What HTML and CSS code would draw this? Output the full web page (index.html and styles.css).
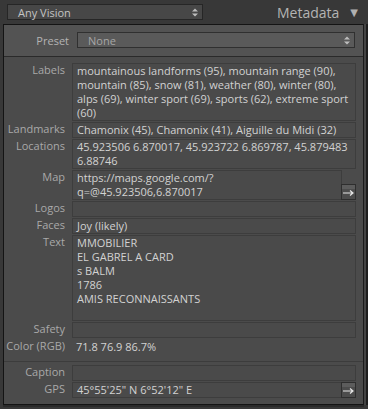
FILE: index.html
```html
<!DOCTYPE html>
<html lang="en">
<head>
	<meta charset="UTF-8">
	<meta name="viewport" content="width=device-width, initial-scale=1.0">
	<title>Metadata</title>
	<link rel="stylesheet" href="styles.css">
</head>
<body>

	<div class="header">
		<div class="popup">
			<span>Any Vision</span>
			<svg class="stepper" width="6" height="9" viewBox="0 0 6 9"><path d="M0 3.5L3 0.5 6 3.5zM0 5.5L3 8.5 6 5.5z" fill="#bdbdbd"/></svg>
		</div>
		<div class="title">Metadata</div>
		<div class="collapse">&#x25BC;</div>
	</div>

	<div class="panel">
		<div class="preset">
			<span class="preset-label">Preset</span>
			<div class="popup preset-popup">
				<span>None</span>
				<svg class="stepper" width="6" height="9" viewBox="0 0 6 9"><path d="M0 3.5L3 0.5 6 3.5zM0 5.5L3 8.5 6 5.5z" fill="#bdbdbd"/></svg>
			</div>
		</div>

		<div class="rows">
			<div class="label">Labels</div>
			<div class="field">mountainous landforms (95), mountain range (90), mountain (85), snow (81), weather (80), winter (80), alps (69), winter sport (69), sports (62), extreme sport (60)</div>

			<div class="label">Landmarks</div>
			<div class="field">Chamonix (45), Chamonix (41), Aiguille du Midi (32)</div>

			<div class="label">Locations</div>
			<div class="field">45.923506 6.870017, 45.923722 6.869787, 45.879483 6.88746</div>

			<div class="label">Map</div>
			<div class="with-button">
				<div class="field">https://maps.google.com/?<br>q=@45.923506,6.870017</div>
				<div class="go"><svg width="13" height="8" viewBox="0 0 13 8"><path d="M1 4h10M8 1.5l3 2.5-3 2.5" fill="none" stroke="#e6e6e6" stroke-width="1.2"/></svg></div>
			</div>

			<div class="label">Logos</div>
			<div class="field"></div>

			<div class="label">Faces</div>
			<div class="field">Joy (likely)</div>

			<div class="label">Text</div>
			<div class="field tall">MMOBILIER<br>EL GABREL A CARD<br>s BALM<br>1786<br>AMIS RECONNAISSANTS</div>

			<div class="label">Safety</div>
			<div class="field"></div>

			<div class="label">Color (RGB)</div>
			<div class="plain">71.8 76.9 86.7%</div>
		</div>

		<div class="rows bottom">
			<div class="label">Caption</div>
			<div class="field"></div>

			<div class="label">GPS</div>
			<div class="with-button">
				<div class="field">45°55'25" N 6°52'12" E</div>
				<div class="go"><svg width="13" height="8" viewBox="0 0 13 8"><path d="M1 4h10M8 1.5l3 2.5-3 2.5" fill="none" stroke="#e6e6e6" stroke-width="1.2"/></svg></div>
			</div>
		</div>
	</div>

</body>
</html>
```

FILE: styles.css
```css
		body {
			font-family: "Open Sans", "DejaVu Sans", sans-serif;
			font-size: 11px;
			background-color: #383838;
			color: #d2d2d2;
			margin: 0;
			height: 409px;
			overflow: hidden;
		}
		.header {
			display: flex;
			align-items: center;
			height: 24px;
			padding: 0 10px 0 7px;
		}
		.popup {
			display: flex;
			align-items: center;
			justify-content: space-between;
			box-sizing: border-box;
			height: 16px;
			width: 196px;
			padding: 0 4px 0 10px;
			background-color: #474747;
			border: 1px solid #262626;
			color: #c4c4c4;
			font-size: 11px;
		}
		.title {
			margin-left: auto;
			font-size: 14px;
			color: #b4b4b4;
		}
		.collapse {
			margin-left: 11px;
			font-size: 10px;
			color: #b0b0b0;
		}
		.panel {
			margin-left: 3px;
			width: 359px;
			border: 1px solid #141414;
			border-right: 1px solid #1c1c1c;
			background-color: #4b4b4b;
			box-shadow: 2px 0 0 #444444, 4px 0 0 #1e1e1e, 0 2px 0 #2a2a2a;
		}
		.preset {
			display: flex;
			align-items: center;
			gap: 8px;
			padding: 7px 8px 8px 0;
			background-color: #535353;
			border-bottom: 1px solid #2a2a2a;
		}
		.preset-label {
			width: 65px;
			text-align: right;
			color: #b4b4b4;
		}
		.preset-popup {
			flex: 1;
			background-color: #5a5a5a;
			border-color: #303030;
			color: #a6a6a6;
		}
		.rows {
			display: grid;
			grid-template-columns: 61px 1fr;
			column-gap: 7px;
			row-gap: 1px;
			padding: 6px 7px 5px 0;
			line-height: 14px;
		}
		.rows.bottom {
			border-top: 1px solid #3c3c3c;
			padding-top: 3px;
			padding-bottom: 6px;
		}
		.label {
			text-align: right;
			color: #a9a9a9;
			white-space: nowrap;
		}
		.field {
			min-height: 14px;
			padding: 0 4px;
			border: 1px solid #3d3d3d;
			background-color: #4a4a4a;
		}
		.field.tall {
			padding-bottom: 14px;
		}
		.plain {
			padding: 1px 4px 2px;
		}
		.with-button {
			display: flex;
			align-items: flex-end;
		}
		.with-button .field {
			flex: 1;
			margin-right: -1px;
		}
		.go {
			display: flex;
			align-items: flex-end;
			justify-content: center;
			box-sizing: border-box;
			width: 15px;
			height: 16px;
			padding-bottom: 2px;
			border: 1px solid #2e2e2e;
			background: linear-gradient(#5c5c5c 0, #5c5c5c 4px, #4c4c4c 4px);
		}
```
